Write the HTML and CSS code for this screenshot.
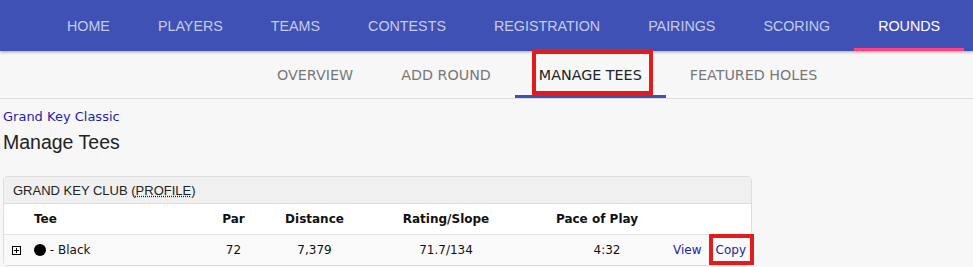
FILE: index.html
```html
<!DOCTYPE html>
<html lang="en">
<head>
  <meta charset="UTF-8">
  <title>Manage Tees</title>
  <link rel="stylesheet" href="styles.css">
</head>
<body>
<header class="topnav">
  <a href="#">HOME</a>
  <a href="#">PLAYERS</a>
  <a href="#">TEAMS</a>
  <a href="#">CONTESTS</a>
  <a href="#">REGISTRATION</a>
  <a href="#">PAIRINGS</a>
  <a href="#">SCORING</a>
  <a href="#" class="active">ROUNDS</a>
</header>
<nav class="subnav">
  <a href="#">OVERVIEW</a>
  <a href="#">ADD ROUND</a>
  <a href="#" class="active"><span class="mark mark-tab">MANAGE TEES</span></a>
  <a href="#">FEATURED HOLES</a>
</nav>
<main class="content">
  <a href="#" class="crumb">Grand Key Classic</a>
  <h1>Manage Tees</h1>
  <section class="panel">
    <div class="panel-head">GRAND KEY CLUB (<abbr>PROFILE</abbr>)</div>
    <table class="tees">
      <colgroup>
        <col style="width:24px">
        <col style="width:172px">
        <col style="width:67px">
        <col style="width:95px">
        <col style="width:168px">
        <col style="width:134px">
        <col>
      </colgroup>
      <thead>
        <tr>
          <th></th>
          <th class="left">Tee</th>
          <th>Par</th>
          <th>Distance</th>
          <th>Rating/Slope</th>
          <th>Pace of Play</th>
          <th></th>
        </tr>
      </thead>
      <tbody>
        <tr>
          <td class="toggle">
            <svg width="9" height="9" viewBox="0 0 9 9"><rect x="0.5" y="0.5" width="8" height="8" fill="none" stroke="#000"/><path d="M2 4.5h5M4.5 2v5" stroke="#000"/></svg>
          </td>
          <td class="left"><span class="dot"></span> - Black</td>
          <td>72</td>
          <td>7,379</td>
          <td>71.7/134</td>
          <td class="pace">4:32</td>
          <td class="actions"><a href="#">View</a><a href="#" class="mark mark-copy">Copy</a></td>
        </tr>
      </tbody>
    </table>
  </section>
</main>
</body>
</html>
```

FILE: styles.css
```css
body {
  margin: 0;
  background: #f7f7f7;
  font-family: "DejaVu Sans", Verdana, sans-serif;
  color: #222;
}

a {
  text-decoration: none;
}

.topnav {
  display: flex;
  height: 51px;
  padding-left: 43px;
  background: #3f51b5;
  box-shadow: 0 1px 3px rgba(0, 0, 0, 0.35);
  position: relative;
}

.topnav a {
  display: flex;
  align-items: center;
  padding: 3px 24px 0;
  font: 14.3px "Liberation Sans", Arial, sans-serif;
  color: #c5cbe9;
  border-bottom: 3px solid transparent;
}

.topnav a.active {
  color: #fff;
  border-bottom-color: #ff4081;
}

.subnav {
  display: flex;
  height: 47px;
  padding-left: 253px;
  border-bottom: 1px solid #ddd;
  background: #f7f7f7;
}

.subnav a {
  display: flex;
  align-items: center;
  padding: 3px 24px 0;
  font-size: 14.3px;
  color: #777;
  border-bottom: 3px solid transparent;
}

.subnav a.active {
  color: #222;
  border-bottom-color: #3f51b5;
}

.mark {
  position: relative;
}

.mark::after {
  content: "";
  position: absolute;
  border: 4px solid #e41b1b;
}

.mark-tab::after {
  left: -7px;
  right: -11px;
  top: -17px;
  bottom: -12px;
}

.mark-copy::after {
  left: -7px;
  right: -8px;
  top: -9px;
  bottom: -8px;
}

.content {
  padding: 10px 3px 0;
}

.crumb {
  display: block;
  font-size: 13px;
  line-height: 16px;
  color: #1f1fa3;
}

h1 {
  margin: 5px 0 0;
  font: 19.5px/24px "Liberation Sans", Arial, sans-serif;
  color: #222;
}

.panel {
  width: 747px;
  margin-top: 22px;
  border: 1px solid #ddd;
  border-radius: 4px;
  background: #fff;
}

.panel-head {
  height: 26px;
  padding: 0 9px;
  display: flex;
  align-items: center;
  background: #f0f0f0;
  border-bottom: 1px solid #ddd;
  border-radius: 4px 4px 0 0;
  font: 13px "Liberation Sans", Arial, sans-serif;
  color: #222;
}

.panel-head abbr {
  text-decoration: underline dotted;
}

.tees {
  width: 100%;
  border-collapse: collapse;
  table-layout: fixed;
  font-size: 12px;
}

.tees th,
.tees td {
  height: 30px;
  padding: 0 6px;
  text-align: center;
  color: #111;
  white-space: nowrap;
}

.tees th {
  font-weight: bold;
  border-bottom: 1px solid #e4e4e4;
}

.tees tbody tr {
  background: #f9f9f9;
}

.tees .left {
  text-align: left;
}

.tees .toggle {
  padding: 0 0 0 8px;
  text-align: left;
}

.tees .toggle svg {
  display: block;
}

.dot {
  display: inline-block;
  width: 12px;
  height: 12px;
  border-radius: 50%;
  background: #000;
  vertical-align: -2px;
}

.tees .pace {
  padding-left: 26px;
}

.tees .actions {
  text-align: right;
  padding: 0 5px 0 0;
}

.actions a {
  color: #1f1fa3;
}

.actions .mark-copy {
  margin-left: 14px;
}
```
